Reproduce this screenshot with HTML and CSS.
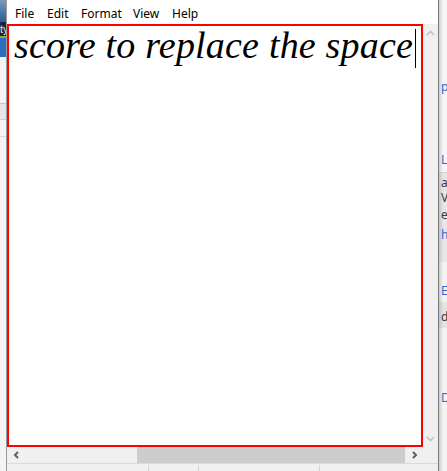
FILE: index.html
```html
<!DOCTYPE html>
<html>
<head>
<meta charset="utf-8">
<link rel="stylesheet" href="styles.css">
</head>
<body>
<div class="screen">
  <div class="left-strip">
    <div class="thumb-sky"></div>
    <div class="thumb-caption">ty</div>
    <div class="thumb-line"></div>
    <div class="thumb-blue"></div>
    <div class="ls-gap1"></div>
    <div class="ls-band"></div>
    <div class="ls-gap2"></div>
    <div class="ls-line"></div>
  </div>
  <div class="win">
    <div class="menubar">
      <span>File</span><span>Edit</span><span>Format</span><span>View</span><span>Help</span>
    </div>
    <div class="body">
      <div class="edit"><span class="txt">score to replace the space</span><span class="caret"></span></div>
      <div class="vscroll">
        <div class="vbtn"><svg width="9" height="6" viewBox="0 0 9 6"><polyline points="1,5 4.5,1.5 8,5" fill="none" stroke="#c2c2c2" stroke-width="1.6"/></svg></div>
        <div class="vbtn"><svg width="9" height="6" viewBox="0 0 9 6"><polyline points="1,1 4.5,4.5 8,1" fill="none" stroke="#c2c2c2" stroke-width="1.6"/></svg></div>
      </div>
      <div class="hscroll">
        <div class="hbtn"><svg width="6" height="8" viewBox="0 0 6 8"><polyline points="5,1 2,4 5,7" fill="none" stroke="#606060" stroke-width="2"/></svg></div>
        <div class="hthumb"></div>
        <div class="hspacer"></div>
        <div class="hbtn"><svg width="6" height="8" viewBox="0 0 6 8"><polyline points="1,1 4,4 1,7" fill="none" stroke="#606060" stroke-width="2"/></svg></div>
      </div>
      <div class="corner"></div>
    </div>
    <div class="status">
      <div class="st1"></div>
      <div class="st st2"></div>
      <div class="st st3"></div>
      <div class="st st4"></div>
    </div>
  </div>
  <div class="right-strip">
    <div class="rs rs-top"></div>
    <div class="rs rs-p link">p</div>
    <div class="rs rs-gap"></div>
    <div class="rs rs-la link">La</div>
    <div class="rs rs-grey">
      <div class="g1 dark">ar</div>
      <div class="g2 dark">V</div>
      <div class="g3 dark">e</div>
      <div class="g4 link">h</div>
    </div>
    <div class="rs rs-e link">E</div>
    <div class="rs rs-d dark">d</div>
    <div class="rs rs-bottom link">D</div>
  </div>
</div>
</body>
</html>
```
FILE: styles.css
```css
* { box-sizing: border-box; margin: 0; padding: 0; }
html, body { width: 447px; height: 471px; overflow: hidden; }
body { background: #f0f0f0; font-family: "Noto Sans", "Liberation Sans", sans-serif; }
.screen { display: flex; width: 447px; height: 471px; }

/* left strip (desktop behind) */
.left-strip { width: 6px; flex: none; display: flex; flex-direction: column; background: #f4f4f4; overflow: hidden; }
.thumb-sky { height: 22px; flex: none; background: linear-gradient(#7c9cbc, #4a78a6 55%, #2f5e8e); }
.thumb-caption { height: 14px; flex: none; background: #16263f; color: #e9e5c4; font-family: "Liberation Sans", sans-serif; font-size: 11px; line-height: 14px; white-space: nowrap; }
.thumb-line { height: 2px; flex: none; background: #9aa83c; }
.thumb-blue { height: 19px; flex: none; background: #2b6dc0; }
.ls-gap1 { height: 46px; flex: none; }
.ls-band { height: 17px; flex: none; background: #e6e6e6; border-top: 1px solid #c8c8c8; border-bottom: 1px solid #cfcfcf; }
.ls-gap2 { height: 16px; flex: none; }
.ls-line { height: 1px; flex: none; background: #dcdcdc; }

/* notepad window */
.win { width: 433px; flex: none; border-left: 1px solid #9c9c9c; border-right: 1px solid #7a7a7a; display: flex; flex-direction: column; background: #fff; }
.menubar { height: 24px; flex: none; background: #fff; display: grid; grid-template-columns: 32px 34px 52px 39px auto; padding: 3px 0 0 8px; font-size: 12px; line-height: 22px; color: #000; }

.body { display: grid; grid-template-columns: 416px 15px; grid-template-rows: 423px 16px; flex: none; }
.edit { border: 2px solid #ff0000; background: #fff; padding: 3px 0 0 5px; font-family: "Liberation Serif", serif; font-style: italic; font-size: 38px; letter-spacing: 0.2px; line-height: 30px; white-space: nowrap; overflow: hidden; color: #000; }
.caret { display: inline-block; width: 1px; height: 39px; background: #000; vertical-align: -10px; margin-left: 2px; }

.vscroll { background: #f0f0f0; display: flex; flex-direction: column; justify-content: space-between; }
.vbtn { height: 17px; display: flex; align-items: center; justify-content: center; }
.hscroll { background: #f0f0f0; display: flex; }
.hbtn { width: 17px; flex: none; display: flex; align-items: center; justify-content: center; }
.hthumb { width: 268px; flex: none; margin-left: 113px; background: #cdcdcd; }
.hspacer { flex: 1; }
.corner { background: #f0f0f0; }

.status { flex: 1; background: #f0f0f0; border-top: 1px solid #dadada; display: flex; padding-top: 1px; }
.st1 { width: 141px; flex: none; }
.st { border-left: 1px solid #d2d2d2; }
.st2 { width: 50px; flex: none; }
.st3 { width: 121px; flex: none; }
.st4 { flex: 1; }

/* right strip (page behind) */
.right-strip { width: 8px; flex: none; display: flex; flex-direction: column; background: #f3f3f3; overflow: hidden; font-size: 12px; line-height: 14px; white-space: nowrap; }
.rs { padding-left: 2px; flex: none; background-image: linear-gradient(to right, rgba(0,0,0,0.16), rgba(0,0,0,0) 4px); }
.link { color: #2a6bd0; }
.dark { color: #3a3a3a; }
.rs-top { height: 80px; background-color: #f5f5f5; }
.rs-p { height: 20px; background-color: #f5f5f5; }
.rs-gap { height: 53px; background-color: #f5f5f5; }
.rs-la { height: 19px; background-color: #f5f5f5; }
.rs-grey { height: 90px; background-color: #e6e6e6; border-top: 1px solid #d2d2d2; padding-top: 3px; }
.g1 { height: 15px; }
.g2 { height: 17px; }
.g3 { height: 20px; }
.rs-e { height: 40px; padding-top: 22px; background-color: #f3f3f3; }
.rs-d { height: 26px; padding-top: 8px; background-color: #e4e4e4; }
.rs-bottom { flex: 1; padding-top: 63px; background-color: #f3f3f3; }
```
